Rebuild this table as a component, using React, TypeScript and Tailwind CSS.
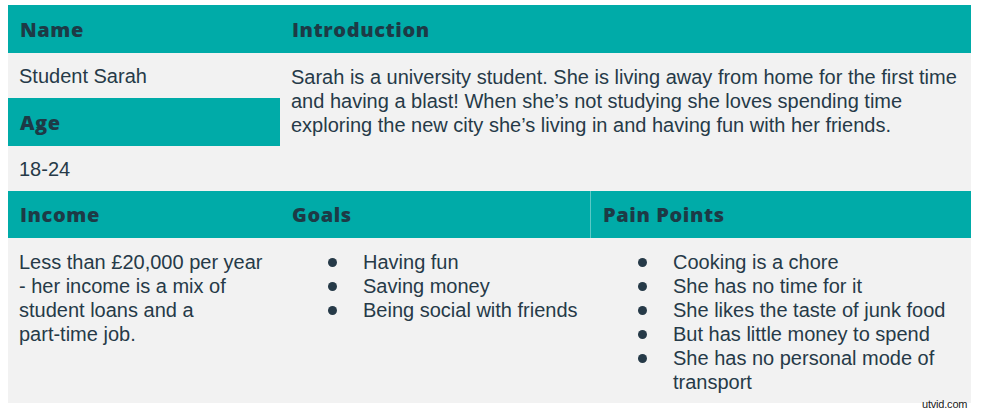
const head = "flex items-center px-[12px] bg-[#00aba8] text-[#1d3a46] text-[20px] font-extrabold tracking-[0.6px] [font-family:'Open_Sans',Lato,sans-serif]";
const cell = "bg-[#f2f2f2] text-[#263a48] text-[20px] leading-[24px] [font-family:'Liberation_Sans',Arial,sans-serif]";

function Bullets({ items }: { items: string[] }) {
  return (
    <ul className="flex flex-col pl-[48px] pr-[8px]">
      {items.map((t) => (
        <li key={t} className="flex">
          <span className="mt-[8px] h-[9px] w-[9px] shrink-0 rounded-full bg-[#263a48]" />
          <span className="ml-[26px]">{t}</span>
        </li>
      ))}
    </ul>
  );
}

export default function App() {
  return (
    <div className="relative h-[412px] w-[982px] bg-white">
      <div className="grid grid-cols-[272px_310px_381px] grid-rows-[48px_45px_48px_45px_47px_165px] pl-[8px] pt-[5px]">
        <div className={`${head} pt-[1px]`}>Name</div>
        <div className={`${head} col-span-2 px-[11px] pt-[1px]`}>Introduction</div>

        <div className={`${cell} flex items-center px-[11px]`}>Student Sarah</div>
        <div className={`${cell} col-span-2 row-span-3 px-[11px] pt-[12px]`}>
          Sarah is a university student. She is living away from home for the first time and having a blast! When she’s not studying she loves spending time exploring the new city she’s living in and having fun with her friends.
        </div>

        <div className={`${head} pt-[1px]`}>Age</div>
        <div className={`${cell} flex items-center px-[11px]`}>18-24</div>

        <div className={`${head} pt-[1px]`}>Income</div>
        <div className={`${head} px-[11px] pt-[1px]`}>Goals</div>
        <div className={`${head} border-l border-[#5cc9c6] px-[11px] pt-[1px]`}>Pain Points</div>

        <div className={`${cell} px-[11px] pt-[12px]`}>
          Less than £20,000 per year - her income is a mix of student loans and a{" "}
          <span className="whitespace-nowrap">part-time</span> job.
        </div>
        <div className={`${cell} pt-[12px]`}>
          <Bullets items={["Having fun", "Saving money", "Being social with friends"]} />
        </div>
        <div className={`${cell} pt-[12px]`}>
          <Bullets
            items={[
              "Cooking is a chore",
              "She has no time for it",
              "She likes the taste of junk food",
              "But has little money to spend",
              "She has no personal mode of transport",
            ]}
          />
        </div>
      </div>
      <span className="absolute left-[922px] top-[398px] text-[11px] leading-[12px] tracking-[-0.2px] text-[#1a1a1a] [font-family:'Liberation_Sans',Arial,sans-serif]">
        utvid.com
      </span>
    </div>
  );
}
